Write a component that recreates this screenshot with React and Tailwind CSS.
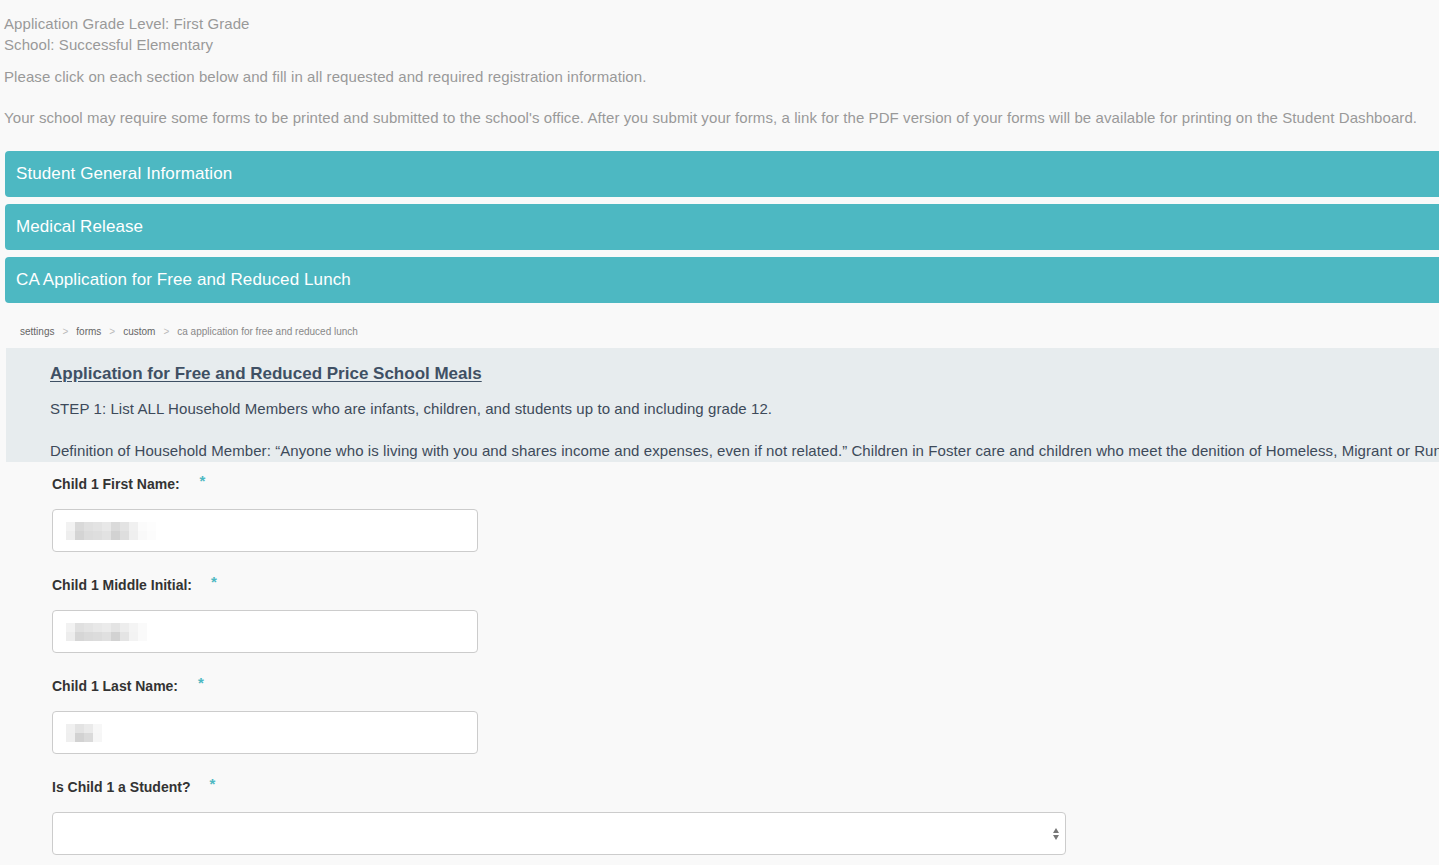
import React from 'react';

const sections = [
  'Student General Information',
  'Medical Release',
  'CA Application for Free and Reduced Lunch',
];

const crumbs = ['settings', 'forms', 'custom', 'ca application for free and reduced lunch'];

// blurred placeholder where the entered values were pixelated out
function Blur({ cells }) {
  return (
    <div className="flex flex-col">
      {cells.map((row, r) => (
        <div key={r} className="flex">
          {row.map((c, i) => (
            <div key={i} className="w-[9px] h-[9px]" style={{ background: c }} />
          ))}
        </div>
      ))}
    </div>
  );
}

const blurA = [
  ['#f2f2f2', '#d9d9d9', '#e0e0e0', '#e3e3e3', '#e8e8e8', '#dadada', '#e3e3e3', '#f0f0f0', '#fbfbfb', '#fdfdfd', '#fff', '#fff', '#fff'],
  ['#eeeeee', '#d4d4d4', '#dcdcdc', '#dedede', '#e2e2e2', '#d2d2d2', '#dedede', '#efefef', '#f9f9f9', '#fcfcfc', '#fff', '#fff', '#fff'],
];

const blurB = [
  ['#f2f2f2', '#e0e0e0', '#e4e4e4', '#e8e8e8', '#ebebeb', '#e4e4e4', '#ededed', '#f4f4f4', '#fafafa', '#fff'],
  ['#ededed', '#d6d6d6', '#dadada', '#dcdcdc', '#e0e0e0', '#d2d2d2', '#e4e4e4', '#f3f3f3', '#fafafa', '#fff'],
];

const blurC = [
  ['#f0f0f0', '#e3e3e3', '#eaeaea', '#f7f7f7'],
  ['#efefef', '#d2d2d2', '#dadada', '#f6f6f6'],
];

function Field({ label, starGap, blur }) {
  return (
    <div className="mb-[21px]">
      <div className="flex items-start h-[24px] text-[14px] font-bold text-[#333]">
        <span className="leading-[24px]">{label}</span>
        <span className="text-[#4db8c2] text-[15px] leading-[18px]" style={{ marginLeft: starGap }}>*</span>
      </div>
      <div className="mt-[13px] w-[426px] h-[43px] bg-white border border-[#cccccc] rounded-[4px] flex items-center pl-[13px]">
        {blur && <Blur cells={blur} />}
      </div>
    </div>
  );
}

export default function App() {
  return (
    <div
      className="min-h-screen w-[1439px] overflow-hidden bg-[#f9f9f9]"
      style={{ fontFamily: '"Liberation Sans", Arial, sans-serif' }}
    >
      <div className="pl-[4px] pt-[13px] text-[15px] tracking-[0.08px] text-[#999] leading-[21px]">
        <p>Application Grade Level: First Grade</p>
        <p>School: Successful Elementary</p>
        <p className="mt-[11px]">Please click on each section below and fill in all requested and required registration information.</p>
        <p className="mt-[20px] whitespace-nowrap">
          Your school may require some forms to be printed and submitted to the school's office. After you submit your forms, a link for the PDF version of your forms will be available for printing on the Student Dashboard.
        </p>
      </div>

      <div className="mt-[23px] ml-[5px] w-[1500px] flex flex-col gap-[7px]">
        {sections.map((s) => (
          <div key={s} className="h-[46px] bg-[#4db8c2] rounded-[4px] flex items-center pl-[11px] text-white text-[17px] tracking-[0.1px]">
            {s}
          </div>
        ))}
      </div>

      <div className="mt-[22px] ml-[20px] flex items-center text-[10px] text-[#666] leading-[14px]">
        {crumbs.map((c, i) => (
          <React.Fragment key={c}>
            {i > 0 && <span className="mx-[8px] text-[#bbb]">&gt;</span>}
            <span className={i === crumbs.length - 1 ? 'text-[#888]' : ''}>{c}</span>
          </React.Fragment>
        ))}
      </div>

      <div className="mt-[9px] ml-[6px] w-[1600px] h-[114px] overflow-hidden bg-[#e7ecee] pl-[44px] pt-[14px] text-[#3d4a5a] whitespace-nowrap">
        <div className="text-[17px] font-bold underline underline-offset-[2px] text-[#3f5064] leading-[24px]">
          Application for Free and Reduced Price School Meals
        </div>
        <p className="mt-[13px] text-[15px] tracking-[0.08px] leading-[20px]">
          STEP 1: List ALL Household Members who are infants, children, and students up to and including grade 12.
        </p>
        <p className="mt-[22px] text-[15px] tracking-[0.08px] leading-[20px]">
          Definition of Household Member: “Anyone who is living with you and shares income and expenses, even if not related.” Children in Foster care and children who meet the denition of Homeless, Migrant or Runaway are eligible for free meals.
        </p>
      </div>

      <div className="pl-[52px] pt-[10px]">
        <Field label="Child 1 First Name:" starGap={20} blur={blurA} />
        <Field label="Child 1 Middle Initial:" starGap={19} blur={blurB} />
        <Field label="Child 1 Last Name:" starGap={20} blur={blurC} />
        <div>
          <div className="flex items-start h-[24px] text-[14px] font-bold text-[#333]">
            <span className="leading-[24px]">Is Child 1 a Student?</span>
            <span className="text-[#4db8c2] text-[15px] leading-[18px] ml-[19px]">*</span>
          </div>
          <div className="mt-[13px] w-[1014px] h-[43px] bg-white border border-[#cccccc] rounded-[4px] flex items-center justify-end pr-[5px]">
            <svg width="8" height="14" viewBox="0 0 8 14">
              <path d="M4 1 L7 6 L1 6 Z" fill="#777" />
              <path d="M4 13 L7 8 L1 8 Z" fill="#777" />
            </svg>
          </div>
        </div>
      </div>
    </div>
  );
}
